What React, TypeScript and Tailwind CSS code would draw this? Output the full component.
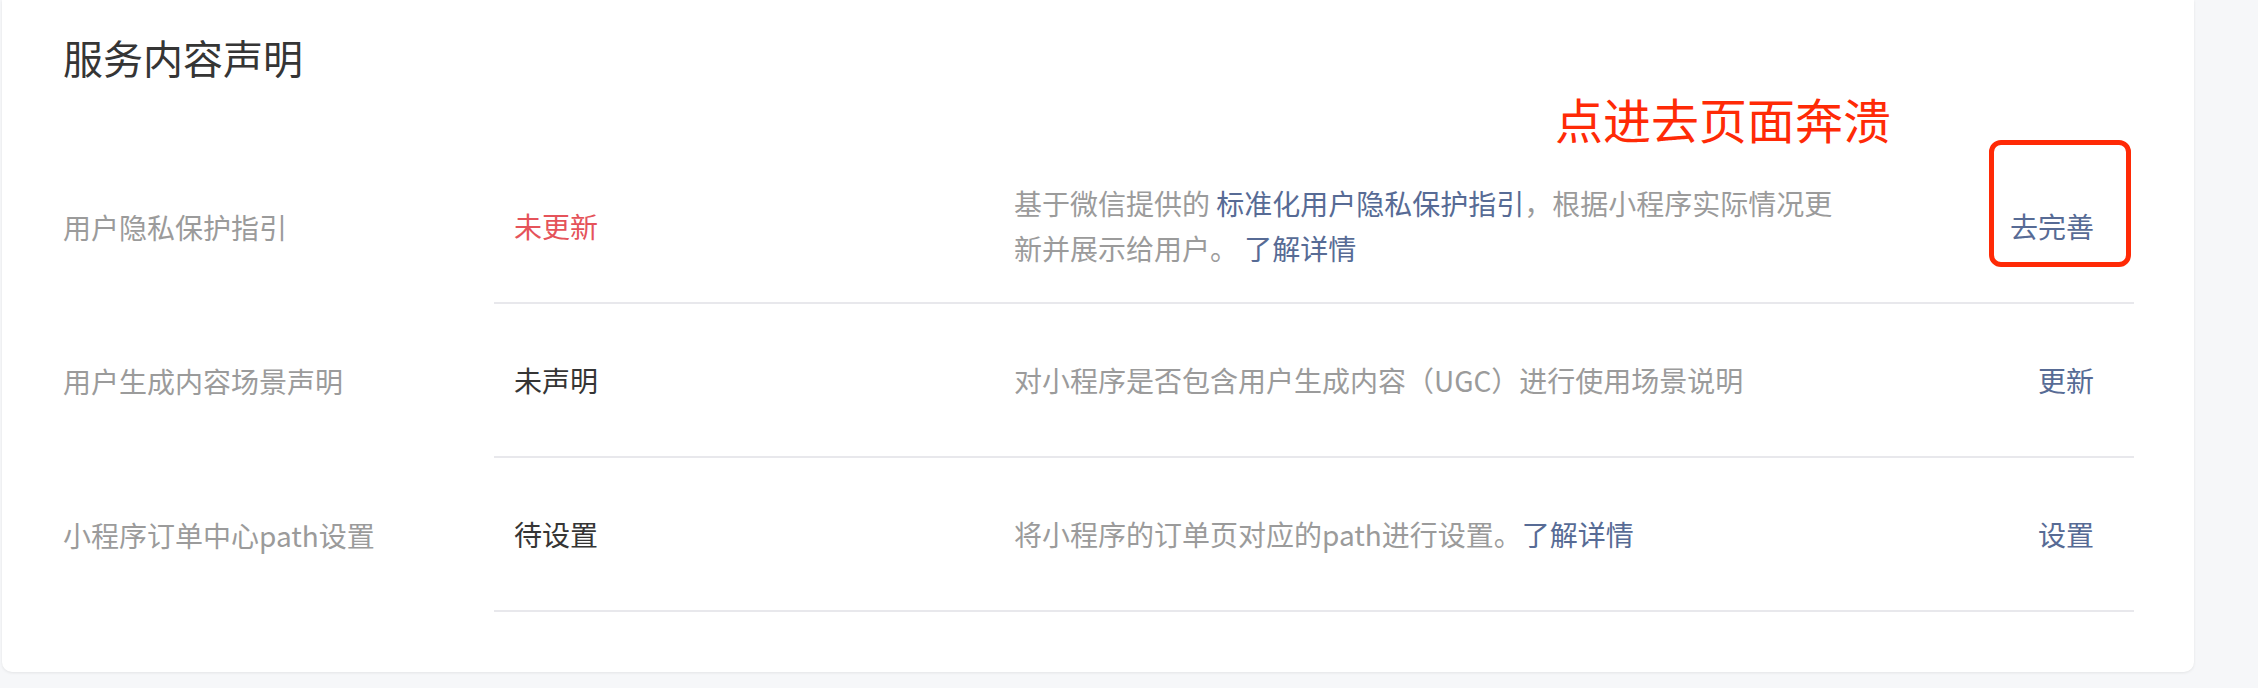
const rows = [
  {
    label: '用户隐私保护指引',
    status: '未更新',
    warn: true,
    action: '去完善',
    marked: true,
  },
  {
    label: '用户生成内容场景声明',
    status: '未声明',
    warn: false,
    action: '更新',
    marked: false,
  },
  {
    label: '小程序订单中心path设置',
    status: '待设置',
    warn: false,
    action: '设置',
    marked: false,
  },
];

const Desc = ({ index }: { index: number }) => {
  if (index === 0) {
    return (
      <p className="max-w-[830px] leading-[45px] text-[#9b9b9b]">
        基于微信提供的 <a className="text-[#576b95]">标准化用户隐私保护指引</a>，根据小程序实际情况更新并展示给用户。{' '}
        <a className="text-[#576b95]">了解详情</a>
      </p>
    );
  }
  if (index === 1) {
    return <p className="leading-[40px] text-[#9b9b9b]">对小程序是否包含用户生成内容（UGC）进行使用场景说明</p>;
  }
  return (
    <p className="leading-[40px] text-[#9b9b9b]">
      将小程序的订单页对应的path进行设置。<a className="text-[#576b95]">了解详情</a>
    </p>
  );
};

const App = () => {
  return (
    <div className="min-h-[688px] w-[2258px] bg-[#f6f7f9] font-['Noto_Sans_CJK_SC','Liberation_Sans',sans-serif]">
      <div className="relative ml-[2px] w-[2192px] rounded-b-[10px] bg-white pl-[61px] pr-[60px] pb-[60px] shadow-[0_1px_3px_rgba(0,0,0,0.08)]">
        {/* 标题 */}
        <div className="h-[150px] pt-[29px]">
          <h2 className="text-[40px] leading-[56px] text-[#353535]">服务内容声明</h2>
        </div>

        {/* 标注 */}
        <span className="absolute left-[1553px] top-[88px] text-[48px] leading-[60px] text-[#ff2a06]">点进去页面奔溃</span>

        {rows.map((row, i) => (
          <div key={row.label} className="flex h-[154px] text-[28px]">
            <div className="flex w-[431px] items-center leading-[40px] text-[#9b9b9b]">{row.label}</div>
            <div className="flex flex-1 items-center border-b-2 border-[#e8e8ec] pr-[40px]">
              <div className={`w-[520px] pl-[20px] leading-[40px] ${row.warn ? 'text-[#e5535a]' : 'text-[#353535]'}`}>
                {row.status}
              </div>
              <div className="flex-1">
                <Desc index={i} />
              </div>
              <div className="relative leading-[40px] text-[#576b95]">
                {row.action}
                {row.marked && (
                  <span className="absolute -top-[66px] -bottom-[21px] -left-[21px] -right-[37px] rounded-[12px] border-[5px] border-[#ff2a06]" />
                )}
              </div>
            </div>
          </div>
        ))}
      </div>
    </div>
  );
};

export default App;
